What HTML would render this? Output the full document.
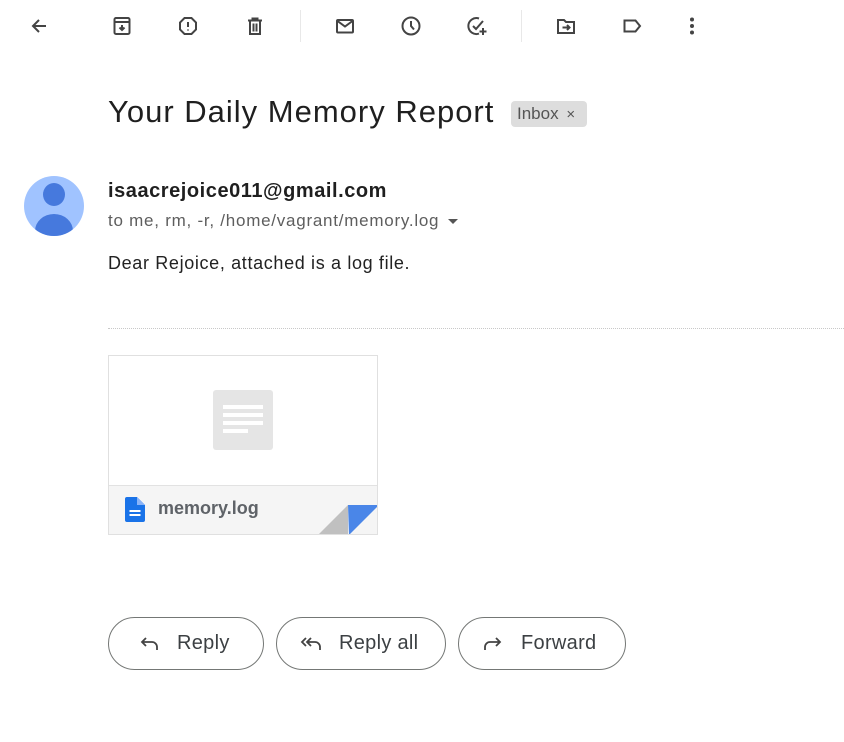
<!DOCTYPE html>
<html><head><meta charset="utf-8"><style>
*{margin:0;padding:0;box-sizing:border-box}
body{width:844px;height:742px;background:#fff;font-family:"Liberation Sans",Arial,sans-serif;position:relative;overflow:hidden;color:#202124}
.ic{position:absolute;top:16px;width:20px;height:20px}
.ic svg{width:20px;height:20px;fill:none;stroke:#444;stroke-width:2}
.div{position:absolute;top:10px;width:1px;height:32px;background:#e8e8e8}
.abs{position:absolute}
.btn{position:absolute;top:617px;height:53px;border:1px solid #747775;border-radius:27px;font-size:20px;color:#3c4043;display:flex;align-items:center;letter-spacing:0.3px}
.btn svg{width:24px;height:24px;fill:none;stroke:#444;stroke-width:1.8;margin-right:16px}
</style></head><body>
<div class="ic" style="left:29px"><svg viewBox="0 0 20 20"><path d="M17 10H4M10 4L4 10l6 6"/></svg></div>
<div class="ic" style="left:112px"><svg viewBox="0 0 20 20"><rect x="2.5" y="2" width="15" height="16" rx="1.5"/><path d="M2.5 6h15M10 9v5M7.5 11.5L10 14l2.5-2.5"/></svg></div>
<div class="ic" style="left:178px"><svg viewBox="0 0 20 20"><path d="M6.5 2h7l4.5 4.5v7L13.5 18h-7L2 13.5v-7z"/><path d="M10 6v5M10 13.5v1"/></svg></div>
<div class="ic" style="left:245px"><svg viewBox="0 0 20 20"><path d="M3 4.5h14M7.5 4.5V2.5h5v2M5 4.5v13.5h10V4.5M8.5 7.5v8M11.5 7.5v8"/></svg></div>
<div class="div" style="left:300px"></div>
<div class="ic" style="left:335px"><svg viewBox="0 0 20 20"><rect x="2" y="4" width="16" height="12.5" rx="1"/><path d="M2.5 5l7.5 5.5L17.5 5"/></svg></div>
<div class="ic" style="left:401px"><svg viewBox="0 0 20 20"><circle cx="10" cy="10" r="8.5"/><path d="M10 5v5l3 3.5"/></svg></div>
<div class="ic" style="left:467px"><svg viewBox="0 0 20 20"><path d="M12 2.5A8 8 0 1 0 12 17.6"/><path d="M6 10l3 3 7-8M16 12v7M12.5 15.5h7"/></svg></div>
<div class="div" style="left:521px"></div>
<div class="ic" style="left:556px"><svg viewBox="0 0 20 20"><path d="M2 4h6l2 2h8v11H2z"/><path d="M6.5 11.5h7M11 9l2.5 2.5L11 14"/></svg></div>
<div class="ic" style="left:622px"><svg viewBox="0 0 20 20"><path d="M2.5 4.5h11l4.5 5.5-4.5 5.5h-11z"/></svg></div>
<div class="ic" style="left:682px"><svg viewBox="0 0 20 20" style="fill:#444;stroke:none"><circle cx="10" cy="3.5" r="2"/><circle cx="10" cy="10" r="2"/><circle cx="10" cy="16.5" r="2"/></svg></div>

<div class="abs" style="left:108px;top:94px;font-size:31px;letter-spacing:1px;color:#1f1f1f;white-space:nowrap">Your Daily Memory Report</div>
<div class="abs" style="left:511px;top:101px;height:26px;width:76px;padding-left:6px;background:#ddd;border-radius:4px;font-size:17px;color:#555;line-height:26px">Inbox <span style="font-size:15px;margin-left:3px">×</span></div>

<div class="abs" style="left:24px;top:176px;width:60px;height:60px;border-radius:50%;background:#a0c3ff;overflow:hidden">
<div class="abs" style="left:19px;top:7px;width:22px;height:23px;border-radius:50%;background:#4679dd"></div>
<div class="abs" style="left:11px;top:38px;width:38px;height:34px;border-radius:50%;background:#4679dd"></div>
</div>
<div class="abs" style="left:108px;top:180px;font-size:20px;font-weight:bold;letter-spacing:0.55px;color:#1f1f1f;white-space:nowrap">isaacrejoice011@gmail.com</div>
<div class="abs" style="left:108px;top:211px;font-size:17px;letter-spacing:0.75px;color:#5e5e5e;white-space:nowrap">to me, rm, -r, /home/vagrant/memory.log</div>
<div class="abs" style="left:448px;top:219px;width:0;height:0;border-left:5px solid transparent;border-right:5px solid transparent;border-top:5px solid #555"></div>
<div class="abs" style="left:108px;top:253px;font-size:18px;letter-spacing:0.65px;color:#222;white-space:nowrap">Dear Rejoice, attached is a log file.</div>

<div class="abs" style="left:108px;top:328px;width:736px;border-top:1px dotted #c8c8c8"></div>

<div class="abs" style="left:108px;top:355px;width:270px;height:180px;border:1px solid #e0e0e0;overflow:hidden">
<div class="abs" style="left:104px;top:34px;width:60px;height:60px;background:#e5e5e5;border-radius:3px"></div>
<div class="abs" style="left:114px;top:49px;width:40px;height:4px;background:#fff"></div>
<div class="abs" style="left:114px;top:57px;width:40px;height:4px;background:#fff"></div>
<div class="abs" style="left:114px;top:65px;width:40px;height:4px;background:#fff"></div>
<div class="abs" style="left:114px;top:73px;width:25px;height:4px;background:#fff"></div>
<div class="abs" style="left:0;top:129px;width:270px;height:51px;background:#f5f5f5;border-top:1px solid #e2e2e2"></div>
<svg class="abs" style="left:16px;top:141px" width="20" height="25" viewBox="0 0 20 25"><path d="M2 0h10l8 8v15a2 2 0 0 1-2 2H2a2 2 0 0 1-2-2V2a2 2 0 0 1 2-2z" fill="#1a73e8"/><path d="M12 0v8h8z" fill="#8ab4f8"/><rect x="4.5" y="13" width="11" height="2" fill="#fff"/><rect x="4.5" y="17" width="11" height="2" fill="#fff"/></svg>
<div class="abs" style="left:49px;top:142px;font-size:18px;font-weight:bold;color:#5f6368">memory.log</div>
<svg class="abs" style="left:209px;top:149px" width="61" height="30" viewBox="0 0 61 30"><path d="M30 0H61L31 30z" fill="#4a86e8"/><path d="M30 0V30H0z" fill="#c0c0c0"/></svg>
</div>

<div class="btn" style="left:108px;width:156px;padding-left:28px"><svg viewBox="0 0 24 24"><path d="M20 18v-3a5 5 0 0 0-5-5H5M9 6l-4 4 4 4"/></svg>Reply</div>
<div class="btn" style="left:276px;width:170px;padding-left:22px"><svg viewBox="0 0 24 24"><path d="M21 18v-3a5 5 0 0 0-5-5H8M12 6l-4 4 4 4M7 6l-4 4 4 4"/></svg>Reply all</div>
<div class="btn" style="left:458px;width:168px;padding-left:22px"><svg viewBox="0 0 24 24"><path d="M4 18v-3a5 5 0 0 1 5-5h10M15 6l4 4-4 4"/></svg>Forward</div>
</body></html>
